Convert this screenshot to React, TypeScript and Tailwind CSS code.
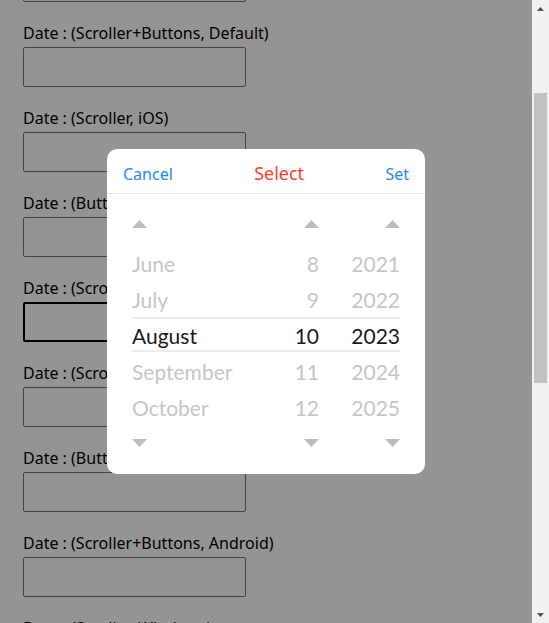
const labels = [
  'Date : (Scroller, Default)',
  'Date : (Scroller+Buttons, Default)',
  'Date : (Scroller, iOS)',
  'Date : (Buttons, iOS)',
  'Date : (Scroller, Android)',
  'Date : (Scroller, Windows)',
  'Date : (Buttons, Android)',
  'Date : (Scroller+Buttons, Android)',
  'Date : (Scroller, Windows)',
];

const months = ['June', 'July', 'August', 'September', 'October'];
const days = ['8', '9', '10', '11', '12'];
const years = ['2021', '2022', '2023', '2024', '2025'];

const Up = () => (
  <svg width="15" height="8" viewBox="0 0 15 8" className="block">
    <path d="M7.5 0 L15 8 L0 8 Z" fill="#bdbdbd" />
  </svg>
);

const Down = () => (
  <svg width="15" height="8" viewBox="0 0 15 8" className="block">
    <path d="M0 0 L15 0 L7.5 8 Z" fill="#bdbdbd" />
  </svg>
);

const Column = ({ items, align, width }: { items: string[]; align: 'left' | 'right'; width: string }) => (
  <div className={`flex flex-col ${width} ${align === 'left' ? 'items-start' : 'items-end'}`}>
    <div className="h-[28px] flex items-center">
      <Up />
    </div>
    <div className="mt-[8px] flex flex-col w-full">
      {items.map((t, i) => (
        <div
          key={t}
          className={`h-[36px] flex items-center text-[21px] ${align === 'left' ? 'justify-start' : 'justify-end'} ${
            i === 2 ? 'text-[#1a1a1a]' : 'text-[#c6c6c6]'
          }`}
        >
          {t}
        </div>
      ))}
    </div>
    <div className="h-[34px] flex items-center">
      <Down />
    </div>
  </div>
);

export default function App() {
  return (
    <div className="h-[623px] w-[549px] flex overflow-hidden bg-white">
      <div className="relative flex-1 overflow-hidden" style={{ fontFamily: '"Noto Sans", "Noto Sans CJK KR", sans-serif' }}>
        <div className="mt-[-63px] pl-[23px] flex flex-col">
          {labels.map((l, i) => (
            <div key={i} className="flex flex-col mb-[20px]">
              <div className="text-[16px] leading-[22px] text-black whitespace-nowrap">{l}</div>
              <div
                className={`mt-[3px] w-[223px] h-[40px] rounded-[2px] ${
                  i === 4 ? 'border-2 border-black' : 'border border-[#767676]'
                }`}
              />
            </div>
          ))}
        </div>

        <div className="absolute inset-0 bg-black/[0.42] flex items-center justify-center">
          <div
            className="w-[318px] h-[325px] bg-white rounded-[10px] flex flex-col"
            style={{ fontFamily: 'Lato, "Noto Sans", sans-serif' }}
          >
            <div className="h-[45px] pt-[5px] px-[16px] flex items-center justify-between border-b border-[#e6e6e6] shrink-0">
              <span className="text-[16px] text-[#1e88f5]" style={{ fontFamily: '"Noto Sans", sans-serif' }}>Cancel</span>
              <span className="text-[18px] text-[#ff3b30]" style={{ fontFamily: '"Noto Sans", sans-serif' }}>Select</span>
              <span className="text-[16px] text-[#1e88f5]" style={{ fontFamily: '"Noto Sans", sans-serif' }}>Set</span>
            </div>
            <div className="relative pt-[16px] pl-[25px] pr-[25px] flex">
              <div className="absolute left-[25px] right-[25px] top-[123px] h-[35px] border-y-2 border-[#ececec]" />
              <Column items={months} align="left" width="flex-1" />
              <Column items={days} align="right" width="w-[40px]" />
              <div className="w-[21px]" />
              <Column items={years} align="right" width="w-[60px]" />
            </div>
          </div>
        </div>
      </div>

      <div className="w-[17px] bg-[#f1f1f1] flex flex-col items-center">
        <div className="h-[17px] flex items-center justify-center">
          <svg width="7" height="4" viewBox="0 0 7 4">
            <path d="M3.5 0 L7 4 L0 4 Z" fill="#505050" />
          </svg>
        </div>
        <div className="mt-[76px] w-[13px] h-[290px] bg-[#c1c1c1]" />
        <div className="flex-1" />
        <div className="h-[17px] flex items-center justify-center">
          <svg width="7" height="4" viewBox="0 0 7 4">
            <path d="M0 0 L7 0 L3.5 4 Z" fill="#505050" />
          </svg>
        </div>
      </div>
    </div>
  );
}
